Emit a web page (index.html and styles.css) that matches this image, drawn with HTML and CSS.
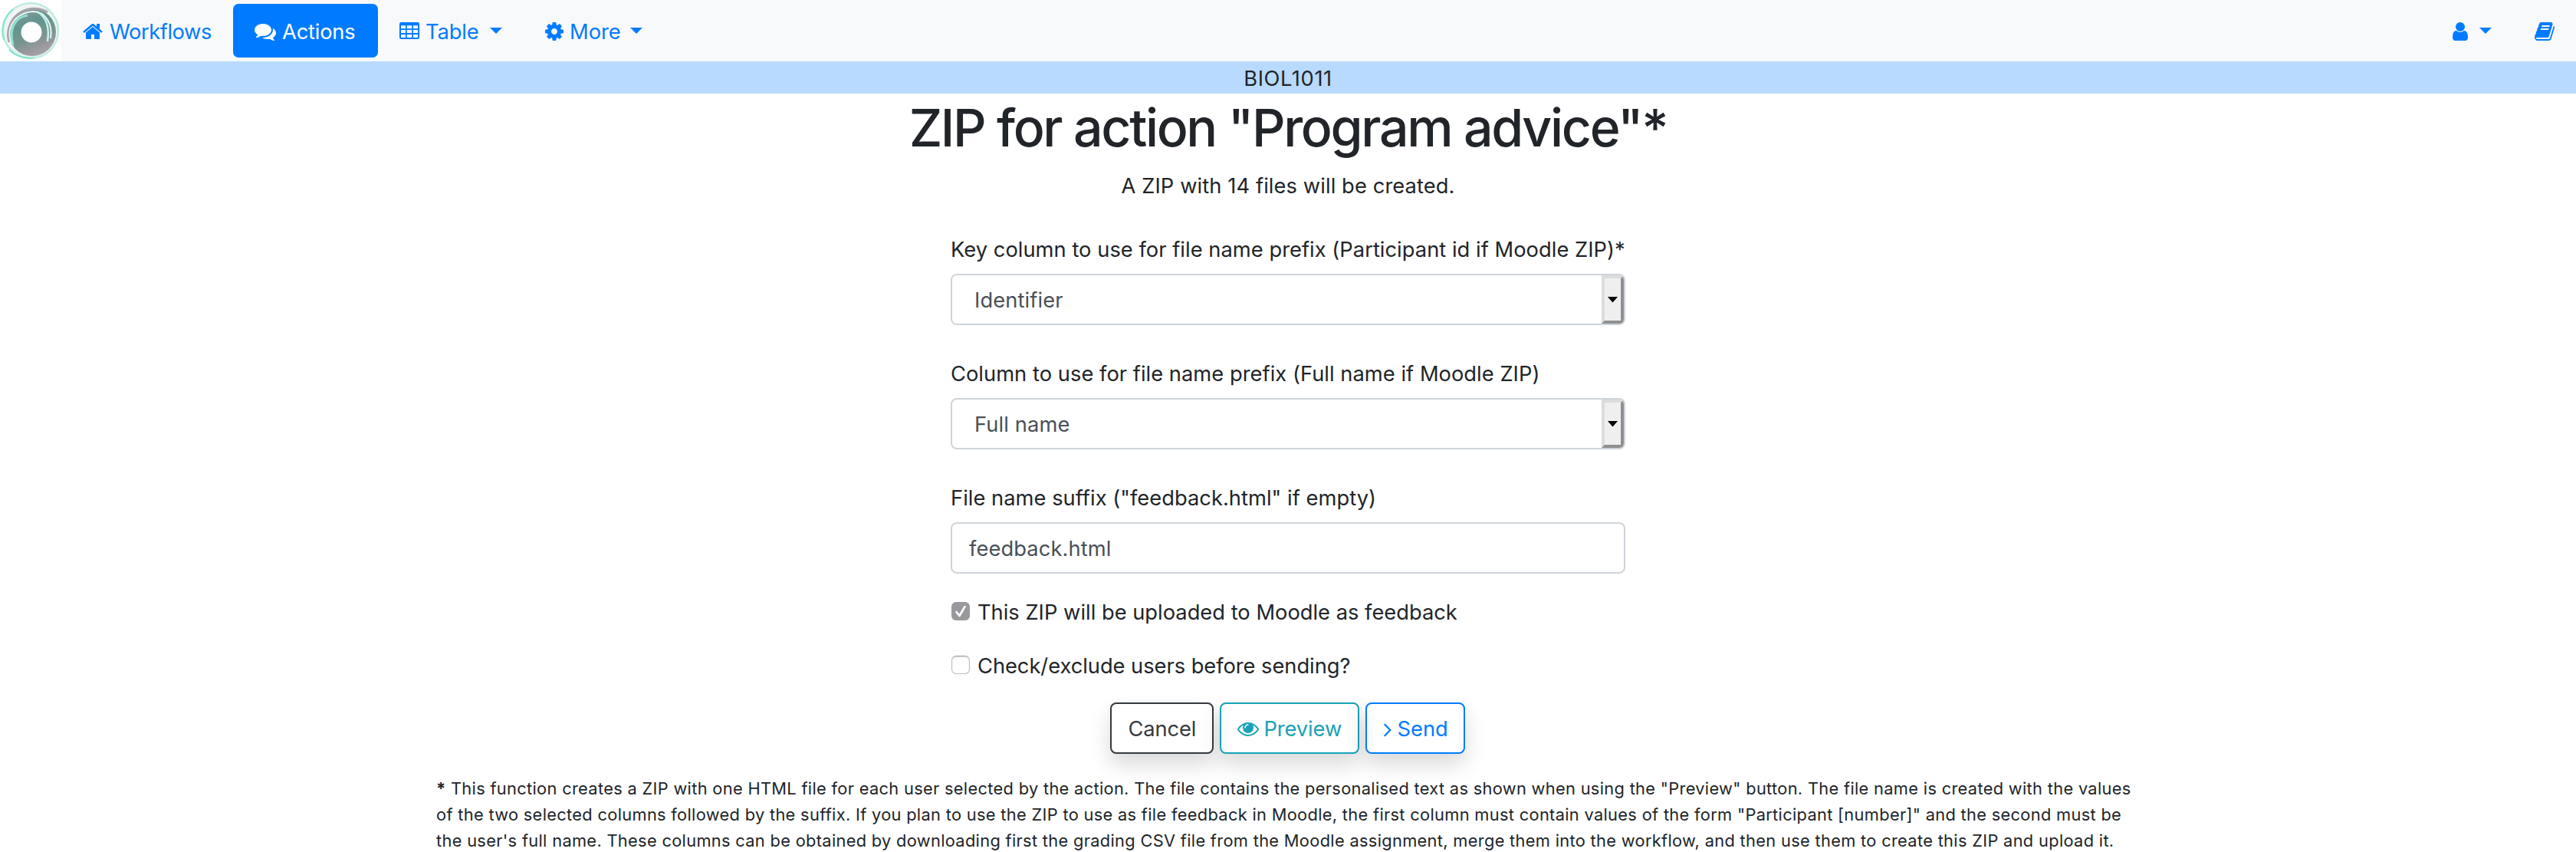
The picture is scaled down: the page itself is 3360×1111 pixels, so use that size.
FILE: index.html
```html
<!DOCTYPE html>
<html lang="en">
<head>
<meta charset="utf-8">
<title>ZIP for action</title>
<link rel="stylesheet" href="styles.css">
</head>
<body>
<nav class="navbar">
  <a class="logo" href="#" aria-label="Home">
    <svg viewBox="0 0 80 80">
      <defs>
        <linearGradient id="ring" x1="0.2" y1="0" x2="0.6" y2="1">
          <stop offset="0" stop-color="#8b9a9c"/><stop offset="0.35" stop-color="#64958f"/>
          <stop offset="0.65" stop-color="#76958f"/><stop offset="0.85" stop-color="#9b979f"/><stop offset="1" stop-color="#a5a2aa"/>
        </linearGradient>
        <filter id="soft"><feGaussianBlur stdDeviation="0.7"/></filter>
      </defs>
      <rect width="80" height="80" fill="#fff"/>
      <g filter="url(#soft)" fill="none">
        <circle cx="40" cy="40" r="36" fill="#f1f4f4" stroke="#bcebdf" stroke-width="2.5"/>
        <path d="M5 52A37 37 0 0 1 17 12M12 65A37 37 0 0 0 45 75" stroke="#83e3ce" stroke-width="2"/>
        <circle cx="42" cy="42" r="31" fill="url(#ring)"/>
        <path d="M12 55A34 34 0 0 1 62 16" stroke="#a6a3ab" stroke-width="3"/>
        <path d="M21 68C3 44 15 17 43 15C60 15 69 32 66 50" stroke="#e9f8f5" stroke-width="2"/>
        <path d="M17 59C11 37 20 22 36 20" stroke="#8fe0cf" stroke-width="3"/>
        <path d="M48 15C59 21 65 34 62 54" stroke="#c5f2e8" stroke-width="2.5"/>
        <path d="M20 66C30 76 49 77 62 67" stroke="#d7f2ec" stroke-width="1.5"/>
        <circle cx="41" cy="42" r="13.5" fill="#fff"/>
      </g>
    </svg>
  </a>
  <a class="link workflows" href="#">
    <svg class="icon" viewBox="0 0 1792 1792"><path d="M1472 992v480q0 26-19 45t-45 19h-384v-384h-256v384h-384q-26 0-45-19t-19-45v-480q0-1 .5-3t.5-3l575-474 575 474q1 2 1 6zm223-69l-62 74q-8 9-21 11h-3q-13 0-21-7l-692-577-692 577q-12 8-24 7-13-2-21-11l-62-74q-8-10-7-23.5t11-21.5l719-599q32-26 76-26t76 26l244 204v-195q0-14 9-23t23-9h192q14 0 23 9t9 23v408l219 182q10 8 11 21.5t-7 23.5z"/></svg>
    <span>Workflows</span>
  </a>
  <a class="link actions" href="#">
    <svg class="icon" viewBox="0 0 1792 1792"><path d="M1408 768q0 139-94 257t-256.5 186.5-353.5 68.5q-86 0-176-16-124 88-278 128-36 9-86 16h-3q-11 0-20.5-8t-11.5-21q-1-3-1-6.5t.5-6.5 2-6l2.5-5 3.5-5.500 4-5 4.500-5 4-4.500q5-6 23-25t26-29.500 22.500-29 25-38.500 20.500-44q-124-72-195-177t-71-224q0-139 94-257t256.500-186.500 353.500-68.500 353.500 68.500 256.500 186.500 94 257zm384 256q0 120-71 224.500t-195 176.500q10 24 20.500 44t25 38.500 22.500 29 26 29.500 23 25q1 1 4 4.500t4.500 5 4 5 3.500 5.500l2.500 5 2 6 .5 6.500-1 6.500q-3 14-13 22t-22 7q-50-7-86-16-154-40-278-128-90 16-176 16-271 0-472-132 58 4 88 4 161 0 309-45t264-129q125-92 192-212t67-254q0-77-23-152 129 71 204 178t75 230z"/></svg>
    <span>Actions</span>
  </a>
  <a class="link table" href="#">
    <svg class="icon" viewBox="0 0 28 28"><path fill-rule="evenodd" d="M3.300 2h21.400a2.300 2.300 0 0 1 2.300 2.300v17.400a2.300 2.300 0 0 1-2.300 2.300h-21.400a2.300 2.300 0 0 1-2.300-2.300v-17.400a2.300 2.300 0 0 1 2.300-2.300zM3 6.200v4h6v-4zm7.700 0v4h6.600v-4zm8.300 0v4h6v-4zM3 12v4h6v-4zm7.700 0v4h6.600v-4zm8.300 0v4h6v-4zM3 18v4h6v-4zm7.700 0v4h6.600v-4zm8.300 0v4h6v-4z"/></svg>
    <span>Table</span><i class="caret"></i>
  </a>
  <a class="link more" href="#">
    <svg class="icon" viewBox="0 0 1792 1792"><path d="M1152 896q0-106-75-181t-181-75-181 75-75 181 75 181 181 75 181-75 75-181zm512-109v222q0 12-8 23t-20 13l-185 28q-19 54-39 91 35 50 107 138 10 12 10 25t-9 23q-27 37-99 108t-94 71q-12 0-26-9l-138-108q-44 23-91 38-16 136-29 186-7 28-36 28h-222q-14 0-24.500-8.500t-11.500-21.500l-28-184q-49-16-90-37l-141 107q-10 9-25 9-14 0-25-11-126-114-165-168-7-10-7-23 0-12 8-23 15-21 51-66.500t54-70.500q-27-50-41-99l-183-27q-13-2-21-12.500t-8-23.500v-222q0-12 8-23t19-13l186-28q14-46 39-92-40-57-107-138-10-12-10-24 0-10 9-23 26-36 98.500-107.500t94.500-71.500q13 0 26 10l138 107q44-23 91-38 16-136 29-186 7-28 36-28h222q14 0 24.500 8.500t11.500 21.500l28 184q49 16 90 37l142-107q9-9 24-9 13 0 25 10 129 119 165 170 7 8 7 22 0 12-8 23-15 21-51 66.500t-54 70.500q26 50 41 98l183 28q13 2 21 12.500t8 23.500z"/></svg>
    <span>More</span><i class="caret"></i>
  </a>
  <a class="link user" href="#" aria-label="Account">
    <svg class="icon" viewBox="0 0 1792 1792"><path d="M1536 1399q0 109-62.500 187t-150.500 78h-854q-88 0-150.500-78t-62.500-187q0-85 8.500-160.500t31.500-152 58.500-131 94-89 134.500-34.500q131 128 313 128t313-128q76 0 134.500 34.500t94 89 58.500 131 31.500 152 8.500 160.500zm-256-887q0 159-112.500 271.500t-271.500 112.500-271.500-112.500-112.500-271.500 112.500-271.500 271.500-112.500 271.500 112.500 112.500 271.500z"/></svg>
    <i class="caret"></i>
  </a>
  <a class="link book" href="#" aria-label="Documentation">
    <svg class="icon" viewBox="0 0 1792 1792"><path d="M1703 478q40 57 18 129l-275 906q-19 64-76.500 107.500t-122.500 43.500h-923q-77 0-148.500-53.500t-99.500-131.500q-24-67-2-127 0-4 3-27t4-37q1-8-3-21.500t-3-19.500q2-11 8-21t16.500-23.500 16.500-23.500q23-38 45-91.500t30-91.500q3-10 .5-30t-.5-28q3-11 17-28t17-23q21-36 42-92t25-90q1-9-2.500-32t.5-28q4-13 22-30.500t22-22.500q19-26 42.500-84.500t27.500-96.500q1-8-3-25.500t-2-26.500q2-8 9-18t18-23 17-21q8-12 16.500-30.500t15-35 16-36 19.500-32 26.500-23.500 36-11.500 47.500 5.500l-1 3q38-9 51-9h761q74 0 114 56t18 130l-274 906q-36 119-71.500 153.500t-128.500 34.500h-869q-27 0-38 15-11 16-1 43 24 70 144 70h923q29 0 56-15.500t35-41.500l300-987q7-22 5-57 38 15 59 43zm-1064 2q-4 13 2 22.500t20 9.500h608q13 0 25.500-9.500t16.500-22.500l21-64q4-13-2-22.500t-20-9.500h-608q-13 0-25.500 9.500t-16.500 22.500zm-83 256q-4 13 2 22.500t20 9.500h608q13 0 25.500-9.500t16.500-22.500l21-64q4-13-2-22.500t-20-9.500h-608q-13 0-25.500 9.500t-16.500 22.500z"/></svg>
  </a>
</nav>
<div class="course"><span>BIOL1011</span></div>
<main>
  <h1>ZIP for action "Program advice"*</h1>
  <p class="intro">A ZIP with 14 files will be created.</p>
  <form class="form">
    <div class="group">
      <label>Key column to use for file name prefix (Participant id if Moodle ZIP)*</label>
      <div class="control select"><span>Identifier</span><b class="arrow"></b></div>
    </div>
    <div class="group">
      <label>Column to use for file name prefix (Full name if Moodle ZIP)</label>
      <div class="control select"><span>Full name</span><b class="arrow"></b></div>
    </div>
    <div class="group">
      <label>File name suffix ("feedback.html" if empty)</label>
      <div class="control"><span>feedback.html</span></div>
    </div>
    <label class="check"><i class="box checked"><svg viewBox="0 0 24 24"><path d="M6.500 13l4 5 7-12"/></svg></i><span>This ZIP will be uploaded to Moodle as feedback</span></label>
    <label class="check"><i class="box"></i><span class="exclude">Check/exclude users before sending?</span></label>
  </form>
  <div class="buttons">
    <a class="btn cancel" href="#"><span>Cancel</span></a>
    <a class="btn preview" href="#"><svg class="icon" viewBox="0 0 1792 1792"><path d="M1664 960q-152-236-381-353 61 104 61 225 0 185-131.500 316.500t-316.500 131.500-316.500-131.500-131.500-316.500q0-121 61-225-229 117-381 353 133 205 333.500 326.500t434.500 121.500 434.500-121.500 333.500-326.500zm-720-384q0-20-14-34t-34-14q-125 0-214.500 89.500t-89.500 214.500q0 20 14 34t34 14 34-14 14-34q0-86 61-147t147-61q20 0 34-14t14-34zm848 384q0 34-20 69-140 230-376.500 368.500t-499.500 138.500-499.500-139-376.500-368q-20-35-20-69t20-69q140-229 376.500-368t499.500-139 499.500 139 376.500 368q20 35 20 69z"/></svg><span>Preview</span></a>
    <a class="btn send" href="#"><svg class="angle" viewBox="0 0 10 18"><path d="M1.300 1.800l7 7.200-7 7.200"/></svg><span>Send</span></a>
  </div>
  <p class="note"><strong>*</strong> This function creates a ZIP with one HTML file for each user selected by the action. The file contains the personalised text as shown when using the "Preview" button. The file name is created with the values<br>of the two selected columns followed by the suffix. If you plan to use the ZIP to use as file feedback in Moodle, the first column must contain values of the form "Participant [number]" and the second must be<br>the user's full name. These columns can be obtained by downloading first the grading CSV file from the Moodle assignment, merge them into the workflow, and then use them to create this ZIP and upload it.</p>
</main>
</body>
</html>
```
FILE: styles.css
```css
* { box-sizing: border-box; }
body {
  margin: 0;
  height: 1111px;
  overflow: hidden;
  background: #fff;
  color: #212529;
  font: 400 27.3px/42px Inter, "Liberation Sans", sans-serif;
}
a { text-decoration: none; }
svg { display: block; flex: none; }

.navbar {
  display: flex;
  align-items: center;
  height: 80px;
  background: #f8f9fa;
}
.logo, .logo svg { width: 80px; height: 80px; }
.link {
  display: flex;
  align-items: center;
  height: 70px;
  padding-top: 2px;
  border-radius: 7px;
  color: #007bff;
  white-space: nowrap;
}
.link span { padding-top: 1px; }
.icon { width: 28px; height: 28px; fill: currentColor; }
.workflows { width: 224px; padding-left: 27px; letter-spacing: -0.45px; }
.workflows span { margin-left: 8px; }
.actions { width: 189px; padding-left: 28px; background: #007bff; color: #fff; letter-spacing: -0.2px; }
.actions span { margin-left: 8px; }
.table { width: 189px; padding-left: 27px; letter-spacing: -0.1px; }
.table span { width: 84px; margin-left: 7px; }
.more { padding-left: 27px; }
.more span { width: 79px; margin-left: 6px; }
.caret {
  flex: none;
  width: 16px;
  height: 8px;
  margin-bottom: 2px;
  background: currentColor;
  clip-path: polygon(0 0, 100% 0, 50% 100%);
}
.user { margin-left: auto; margin-right: 55px; }
.user .caret { margin-left: 11px; }
.book { margin-right: 27px; }

.course {
  height: 42px;
  padding-top: 2px;
  background: #b8daff;
  text-align: center;
  letter-spacing: 0.6px;
}

h1 {
  margin: 0 0 14px;
  padding-top: 2px;
  height: 84px;
  font-size: 68px;
  font-weight: 500;
  line-height: 84px;
  letter-spacing: -2.37px;
  text-align: center;
}
.intro { height: 42px; margin: 0; padding-top: 2px; text-align: center; letter-spacing: 0.09px; }

.form { width: 880px; margin: 39px auto 0; }
.group { height: 162px; }
.group label { display: block; height: 42px; margin: 0 0 14px; padding-top: 4px; white-space: nowrap; letter-spacing: 0.03px; }
.control {
  display: flex;
  align-items: center;
  justify-content: space-between;
  height: 67px;
  padding: 2px 0 0 22px;
  border: 2px solid #ced4da;
  border-radius: 8px;
  color: #495057;
  letter-spacing: 0.1px;
  overflow: hidden;
}
.select { padding: 0 0 0 29px; }
.select span { padding-top: 3px; }
.arrow {
  display: flex;
  align-items: center;
  justify-content: center;
  width: 29px;
  height: 63px;
  border: 4px solid;
  border-color: #dcdcdc #8f8f8f #8f8f8f #dcdcdc;
  background: #efefef;
}
.arrow::before {
  content: "";
  width: 14px;
  height: 8px;
  background: #000;
  clip-path: polygon(0 0, 100% 0, 50% 100%);
}
.check { display: flex; align-items: center; height: 42px; margin: -11px 0 28px; }
.check + .check { margin: 0; }
.check span { padding-top: 3px; }
.exclude { letter-spacing: -0.04px; }
.box {
  width: 24px;
  height: 24px;
  margin: 0 10px 0 1px;
  border: 1.5px solid #bcbcbc;
  border-top-color: #999;
  border-radius: 6px;
  box-shadow: inset 0 1px 2px #ddd;
}
.box.checked { border: 0; background: #98989d; box-shadow: none; }
.box path { fill: none; stroke: #fff; stroke-width: 2.6; stroke-linecap: round; stroke-linejoin: round; }

.buttons { display: flex; justify-content: center; gap: 8px; margin-top: 28px; padding-right: 2px; }
.btn {
  display: flex;
  align-items: center;
  height: 67px;
  padding-left: 22px;
  border: 2px solid;
  border-radius: 8px;
  box-shadow: 0 14px 28px rgba(0, 0, 0, 0.15);
}
.btn span { padding-top: 2px; }
.cancel { width: 135px; color: #343a40; letter-spacing: -0.15px; }
.preview { width: 182px; padding-left: 21px; color: #17a2b8; letter-spacing: -0.1px; }
.preview span { margin-left: 7px; }
.send { width: 130px; color: #007bff; }
.angle { width: 10px; height: 18px; margin-top: 4px; fill: none; stroke: currentColor; stroke-width: 2.2; stroke-linecap: round; }
.send span { margin-left: 8px; }

.note {
  margin: 29px 0 0 569px;
  font-size: 21.8px;
  line-height: 33.8px;
  letter-spacing: 0.325px;
  white-space: nowrap;
}
```
